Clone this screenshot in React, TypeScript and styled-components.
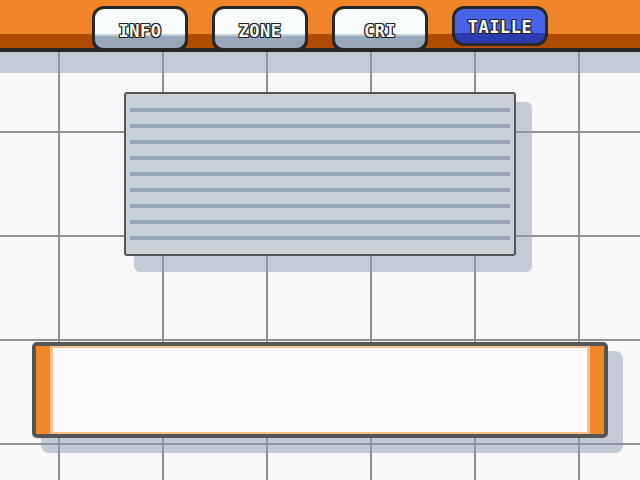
import React, {useState} from 'react';
import styled, {createGlobalStyle} from "styled-components";

const GlobalStyle = createGlobalStyle`
  html, body {
    margin: 0;
    padding: 0;
    background: #f8f8f8;
  }
`

const shadowColor = "rgba(140, 158, 180, 0.5)"

const StyledScreen = styled.div`
  width: 640px;
  height: 480px;
  overflow: hidden;
  display: flex;
  flex-direction: column;
  align-items: center;
  background-color: #f8f8f8;
  background-image: linear-gradient(90deg, #909090 2px, transparent 2px),
    linear-gradient(180deg, #909090 2px, transparent 2px);
  background-size: 104px 104px;
  background-position: 58px 27px, 58px 27px;
`

const StyledHeader = styled.div`
  width: 100%;
  height: 52px;
  box-sizing: border-box;
  padding-top: 6px;
  display: flex;
  justify-content: center;
  align-items: flex-start;
  gap: 24px;
  background: linear-gradient(180deg, #f08428 0 34px, #b04c00 34px 48px, #282828 48px 52px);
  box-shadow: 0 21px 0 ${shadowColor};
`

const StyledTab = styled.button<{ $active: boolean }>`
  width: 96px;
  height: ${p => p.$active ? "40px" : "46px"};
  box-sizing: border-box;
  margin: 0;
  padding: ${p => p.$active ? "3px" : "6px"} 0 0;
  display: flex;
  align-items: center;
  justify-content: center;
  border: 3px solid #282828;
  border-bottom-width: ${p => p.$active ? "3px" : "4px"};
  border-radius: 12px;
  background: ${p => p.$active
          ? "linear-gradient(180deg, #4862e8 0 24px, #2a3cb0 24px)"
          : "linear-gradient(180deg, #f8fcfc 0 25px, #c8d0d8 25px 27px, #98a8b8 27px)"};
  font-family: "DejaVu Sans Mono", "Liberation Mono", monospace;
  font-weight: bold;
  font-size: 17px;
  letter-spacing: 0.5px;
  line-height: 15px;
  color: #f4fafa;
  text-shadow: 1px 0 0 #202020, -1px 0 0 #202020, 0 1px 0 #202020, 0 -1px 0 #202020,
    1px 1px 0 #202020, -1px -1px 0 #202020, 1px -1px 0 #202020, -1px 1px 0 #202020;
  cursor: pointer;
`

const StyledPanel = styled.div`
  margin-top: 40px;
  width: 392px;
  height: 164px;
  box-sizing: border-box;
  padding: 14px 4px 0;
  display: flex;
  flex-direction: column;
  gap: 12px;
  background: #c8d0d8;
  border: 2px solid #555555;
  border-radius: 3px;
  box-shadow: 13px 13px 0 3px ${shadowColor};
`

const StyledRule = styled.div`
  height: 4px;
  background: #98a8b8;
`

const StyledTextBox = styled.div`
  margin-top: 86px;
  width: 576px;
  height: 96px;
  box-sizing: border-box;
  display: flex;
  background: #fafafa;
  border: 4px solid #555555;
  border-radius: 5px;
  box-shadow: 12px 12px 0 3px ${shadowColor};
`

const StyledStrip = styled.div`
  width: 14px;
  background: #f08828;
`

const StyledTextArea = styled.div`
  flex: 1;
  border: 3px solid #ffc090;
  border-top-width: 2px;
  border-bottom-width: 2px;
  background: #fafafa;
`

const tabs = ["INFO", "ZONE", "CRI", "TAILLE"]

const App: React.FC = () => {
    const [active, setActive] = useState("TAILLE")

    return (
        <StyledScreen>
            <GlobalStyle/>
            <StyledHeader>
                {tabs.map(tab => (
                    <StyledTab key={tab} $active={tab === active} onClick={() => setActive(tab)}>
                        {tab}
                    </StyledTab>
                ))}
            </StyledHeader>
            <StyledPanel>
                {Array.from({length: 9}).map((_, i) => <StyledRule key={i}/>)}
            </StyledPanel>
            <StyledTextBox>
                <StyledStrip/>
                <StyledTextArea/>
                <StyledStrip/>
            </StyledTextBox>
        </StyledScreen>
    );
};

export default App;
